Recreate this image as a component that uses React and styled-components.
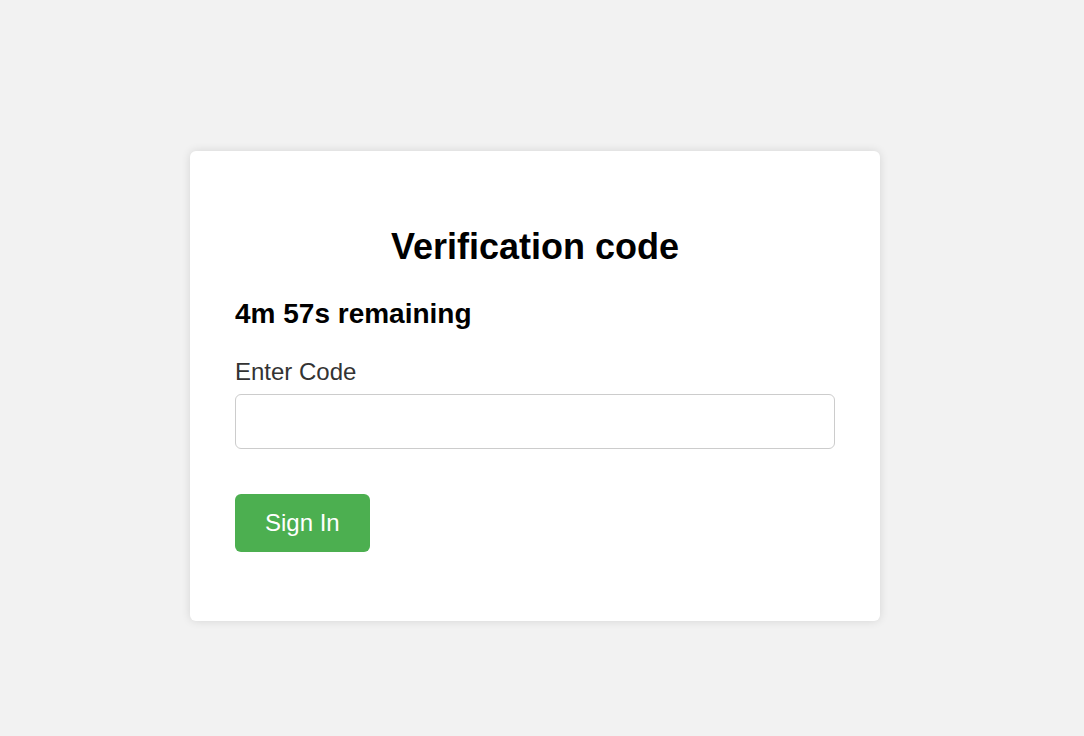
import React from "react";
import styled, { createGlobalStyle } from "styled-components";

const Global = createGlobalStyle`
  html, body { margin: 0; padding: 0; background: #f2f2f2; }
  body { font-family: "Liberation Sans", Arial, sans-serif; }
  * { box-sizing: border-box; }
`;

const Page = styled.div`
  min-height: 736px;
  padding: 151px 0 0 190px;
`;

const Card = styled.div`
  width: 690px;
  background: #fff;
  border-radius: 6px;
  box-shadow: 0 0 10px rgba(0, 0, 0, 0.12);
  padding: 75px 45px 69px;
`;

const Title = styled.h1`
  margin: 0 0 30px;
  text-align: center;
  font-size: 36px;
  font-weight: bold;
  color: #000;
`;

const Timer = styled.h3`
  margin: 0 0 28px;
  font-size: 28px;
  font-weight: bold;
  color: #000;
`;

const Label = styled.label`
  display: block;
  font-size: 24px;
  color: #333;
  margin-bottom: 8px;
`;

const Input = styled.input`
  display: block;
  width: 600px;
  height: 55px;
  border: 1px solid #ccc;
  border-radius: 6px;
  font-size: 20px;
  padding: 0 12px;
  margin-bottom: 45px;
  font-family: inherit;
  outline: none;
`;

const Button = styled.button`
  display: block;
  background: #4caf50;
  color: #fff;
  border: none;
  border-radius: 6px;
  font-family: inherit;
  font-size: 24px;
  padding: 15px 30px;
  cursor: pointer;
`;

export default function App() {
  return (
    <>
      <Global />
      <Page>
        <Card>
          <Title>Verification code</Title>
          <Timer>4m 57s remaining</Timer>
          <Label htmlFor="code">Enter Code</Label>
          <Input id="code" type="text" />
          <Button>Sign In</Button>
        </Card>
      </Page>
    </>
  );
}
